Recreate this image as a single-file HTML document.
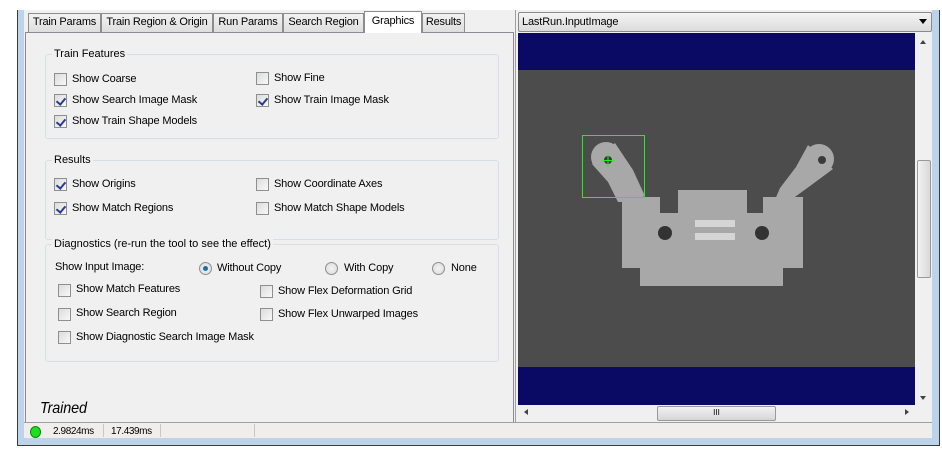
<!DOCTYPE html><html><head><style>
*{margin:0;padding:0;box-sizing:border-box}
body{width:942px;height:455px;background:#fff;position:relative;overflow:hidden;font-family:"Liberation Sans",sans-serif;font-size:11px;color:#000}
.a{position:absolute}
.t{position:absolute;white-space:nowrap;line-height:13px;letter-spacing:-0.15px}
.cb{position:absolute;width:13px;height:13px;border:1px solid #8e8f8f;background:linear-gradient(135deg,#dcdcdc,#f8f8f8)}
.cb.c::after{content:"";position:absolute;left:3px;top:1px;width:4px;height:7px;border:solid #2a3b8f;border-width:0 2px 2px 0;transform:rotate(40deg)}
.rd{position:absolute;width:13px;height:13px;border-radius:50%;border:1px solid #8e8f8f;background:radial-gradient(#f4f4f4,#d8d8d8)}
.rd.c::after{content:"";position:absolute;left:3px;top:3px;width:5px;height:5px;border-radius:50%;background:#1b6ea8}
.grp{position:absolute;border:1px solid #d5dfe5;border-radius:3px}
.gl{position:absolute;background:#f0f0f0;padding:0 2px;line-height:13px}
.tab{position:absolute;top:13px;height:19px;border:1px solid #8d8d8d;border-bottom:none;background:linear-gradient(#f2f2f2,#dedede);text-align:center;line-height:17px;letter-spacing:-0.2px}
</style></head><body>
<div class="a" style="left:17px;top:10px;width:923px;height:436px;background:#bcd3ea;border:1px solid #3c3c3c;border-top:none"></div>
<div class="a" style="left:24px;top:10px;width:908px;height:428px;background:#f0f0f0"></div>
<div class="a" style="left:25px;top:32px;width:489px;height:391px;border:1px solid #898c95;background:#f0f0f0"></div>
<div class="tab" style="left:28px;width:73px">Train Params</div>
<div class="tab" style="left:101px;width:112px">Train Region &amp; Origin</div>
<div class="tab" style="left:213px;width:70px">Run Params</div>
<div class="tab" style="left:283px;width:81px">Search Region</div>
<div class="tab" style="left:364px;top:11px;height:22px;width:58px;background:#fff;line-height:18px">Graphics</div>
<div class="tab" style="left:422px;width:43px">Results</div>
<div class="grp" style="left:45px;top:54px;width:454px;height:85px"></div>
<div class="gl" style="left:52px;top:48px">Train Features</div>
<div class="cb" style="left:54px;top:73px"></div><div class="t" style="left:72px;top:73px">Show Coarse</div>
<div class="cb" style="left:256px;top:72px"></div><div class="t" style="left:274px;top:72px">Show Fine</div>
<div class="cb c" style="left:54px;top:94px"></div><div class="t" style="left:72px;top:94px">Show Search Image Mask</div>
<div class="cb c" style="left:256px;top:94px"></div><div class="t" style="left:274px;top:94px">Show Train Image Mask</div>
<div class="cb c" style="left:54px;top:115px"></div><div class="t" style="left:72px;top:115px">Show Train Shape Models</div>
<div class="grp" style="left:45px;top:160px;width:454px;height:80px"></div>
<div class="gl" style="left:52px;top:154px">Results</div>
<div class="cb c" style="left:54px;top:178px"></div><div class="t" style="left:72px;top:178px">Show Origins</div>
<div class="cb" style="left:256px;top:178px"></div><div class="t" style="left:274px;top:178px">Show Coordinate Axes</div>
<div class="cb c" style="left:54px;top:202px"></div><div class="t" style="left:72px;top:202px">Show Match Regions</div>
<div class="cb" style="left:256px;top:202px"></div><div class="t" style="left:274px;top:202px">Show Match Shape Models</div>
<div class="grp" style="left:45px;top:244px;width:454px;height:118px"></div>
<div class="gl" style="left:52px;top:238px">Diagnostics (re-run the tool to see the effect)</div>
<div class="t" style="left:55px;top:261px">Show Input Image:</div>
<div class="rd c" style="left:199px;top:262px"></div><div class="t" style="left:217px;top:262px">Without Copy</div>
<div class="rd" style="left:325px;top:262px"></div><div class="t" style="left:344px;top:262px">With Copy</div>
<div class="rd" style="left:432px;top:262px"></div><div class="t" style="left:451px;top:262px">None</div>
<div class="cb" style="left:58px;top:284px"></div><div class="t" style="left:76px;top:283px">Show Match Features</div>
<div class="cb" style="left:260px;top:285px"></div><div class="t" style="left:278px;top:285px">Show Flex Deformation Grid</div>
<div class="cb" style="left:58px;top:308px"></div><div class="t" style="left:76px;top:307px">Show Search Region</div>
<div class="cb" style="left:260px;top:308px"></div><div class="t" style="left:278px;top:308px">Show Flex Unwarped Images</div>
<div class="cb" style="left:58px;top:331px"></div><div class="t" style="left:76px;top:331px">Show Diagnostic Search Image Mask</div>
<div class="t" style="left:40px;top:400px;font-size:16px;line-height:18px;font-style:italic;transform:scaleX(0.9);transform-origin:left">Trained</div>
<div class="a" style="left:24px;top:422px;width:908px;height:1px;background:#a0a0a0"></div>
<div class="a" style="left:24px;top:423px;width:908px;height:15px;background:#f0eeec"></div>
<div class="a" style="left:30px;top:426px;width:11px;height:12px;border-radius:50%;background:#1fdd1f;border:1px solid #0a8a0a"></div>
<div class="t" style="left:53px;top:425px;font-size:10px;letter-spacing:-0.4px">2.9824ms</div>
<div class="a" style="left:103px;top:424px;width:1px;height:13px;background:#c8c8c8"></div>
<div class="t" style="left:111px;top:425px;font-size:10px;letter-spacing:-0.4px">17.439ms</div>
<div class="a" style="left:160px;top:424px;width:1px;height:13px;background:#c8c8c8"></div>
<div class="a" style="left:254px;top:424px;width:1px;height:13px;background:#c8c8c8"></div>
<div class="a" style="left:515px;top:10px;width:1px;height:412px;background:#a0a0a0"></div>
<div class="a" style="left:518px;top:12px;width:414px;height:20px;border:1px solid #8a8a8a;border-radius:2px;background:linear-gradient(#f4f4f4,#dcdcdc)"></div>
<div class="t" style="left:522px;top:16px">LastRun.InputImage</div>
<div class="a" style="left:919px;top:19px;width:0;height:0;border-left:4px solid transparent;border-right:4px solid transparent;border-top:5px solid #000"></div>
<div class="a" style="left:518px;top:33px;width:397px;height:372px;background:#0a0a64"></div>
<div class="a" style="left:518px;top:70px;width:397px;height:297px;background:#4c4c4c"></div>
<svg class="a" style="left:518px;top:70px" width="397" height="297">
<g fill="#a8a8a8">
<circle cx="88" cy="87" r="15"/>
<path d="M74 94 L97 73 L115 100 L126 124 L125 132 L100 132 L90 112 Z"/>
<circle cx="301" cy="89" r="15"/>
<path d="M290 75 L315 99 L292 116 L270 132 L256 132 L262 118 L278 97 Z"/>
<path d="M104 127 L142 127 L142 143 L160 143 L160 120 L229 120 L229 143 L245 143 L245 127 L285 127 L285 198 L265 198 L265 216 L122 216 L122 198 L104 198 Z"/>
</g>
<circle cx="90" cy="90" r="4" fill="#3a3a3a"/><circle cx="304" cy="90" r="4" fill="#3a3a3a"/>
<circle cx="147" cy="163" r="7" fill="#333"/><circle cx="244" cy="163" r="7" fill="#333"/>
<rect x="177" y="150" width="40" height="7" fill="#d5d5d5"/><rect x="177" y="163" width="40" height="7" fill="#d5d5d5"/>
<rect x="64.5" y="65.5" width="62" height="62" fill="none" stroke="#22ee22"/>
<path d="M90 84V97M84 90.5H96" stroke="#22ee22"/>
</svg>
<div class="a" style="left:915px;top:33px;width:17px;height:372px;background:#f0f0f0"></div>
<div class="a" style="left:920px;top:40px;border-left:3px solid transparent;border-right:3px solid transparent;border-bottom:4px solid #444"></div>
<div class="a" style="left:917px;top:160px;width:14px;height:118px;border:1px solid #999;border-radius:2px;background:linear-gradient(90deg,#f2f2f2,#d8d8d8)"></div>
<div class="a" style="left:920px;top:396px;border-left:3px solid transparent;border-right:3px solid transparent;border-top:4px solid #444"></div>
<div class="a" style="left:518px;top:405px;width:397px;height:16px;background:#f0f0f0"></div>
<div class="a" style="left:524px;top:409px;border-top:3px solid transparent;border-bottom:3px solid transparent;border-right:4px solid #444"></div>
<div class="a" style="left:657px;top:406px;width:119px;height:15px;border:1px solid #999;border-radius:2px;background:linear-gradient(#f2f2f2,#d6d6d6);text-align:center;font-size:8px;line-height:12px">III</div>
<div class="a" style="left:905px;top:409px;border-top:3px solid transparent;border-bottom:3px solid transparent;border-left:4px solid #444"></div>
</body></html>
